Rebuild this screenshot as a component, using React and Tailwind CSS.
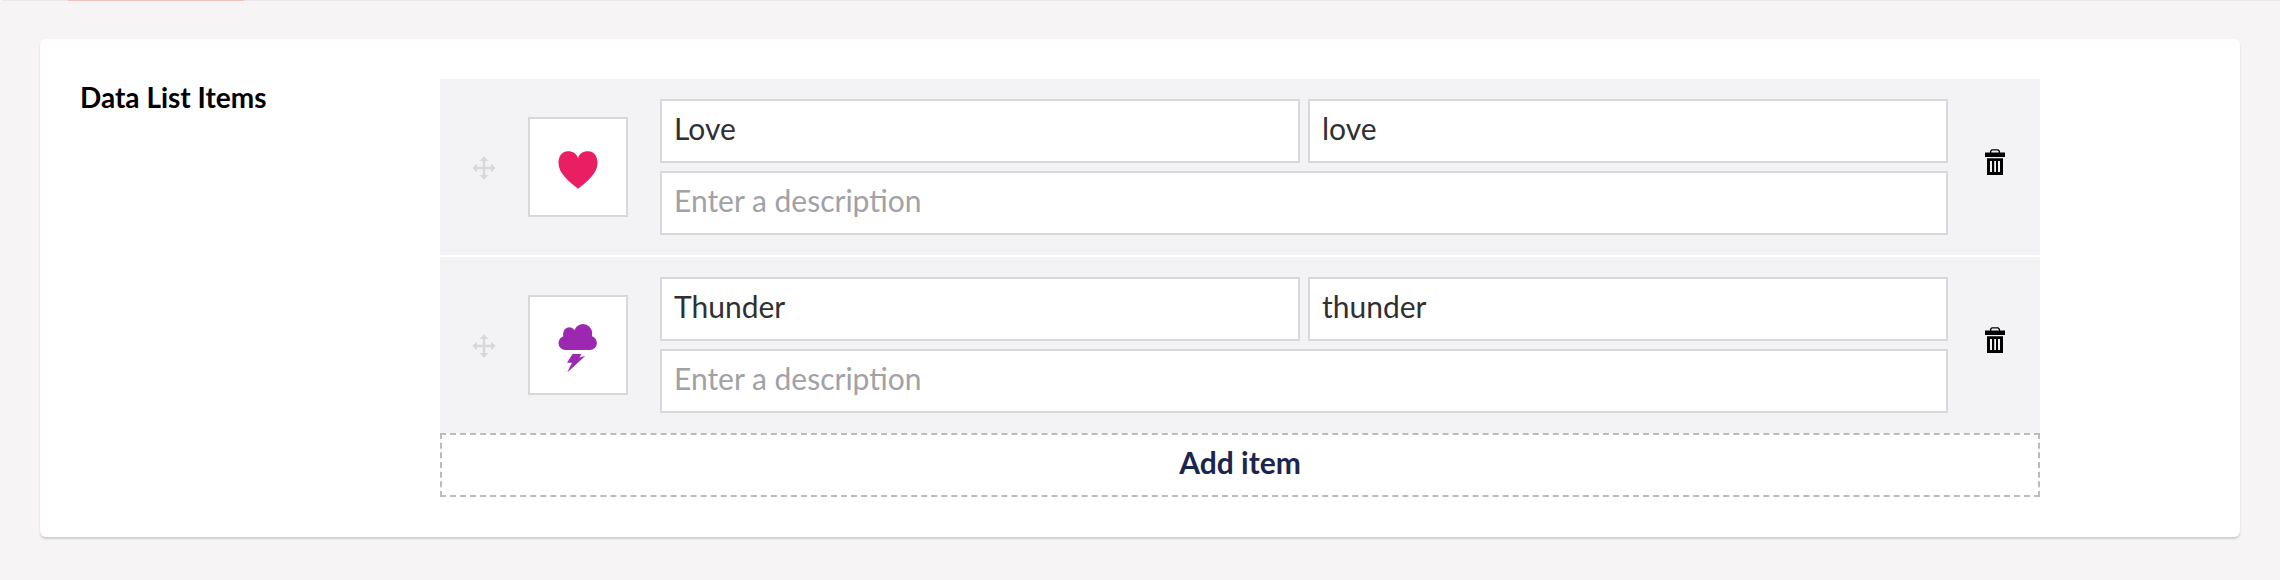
function HandleIcon() {
  return (
    <svg className="mt-0.5 size-6 shrink-0 text-[#d8d7d9]" viewBox="0 0 24 24" fill="currentColor">
      <path d="M12 .2l4.300 4.800h-3.100v5.800H19V7.700L23.800 12L19 16.300v-3.100h-5.800V19h3.100L12 23.800L7.700 19h3.100v-5.800H5v3.100L.2 12L5 7.700v3.100h5.800V5H7.700z" />
    </svg>
  );
}

function HeartIcon() {
  return (
    <svg className="mt-1.5 h-[38px] w-10" viewBox="0 0 40 38" fill="#e91e63">
      <path d="M20 7.200C21.200 2.500 25 .2 30 .2C36 .2 39.500 5 39.500 12C39.500 22.500 29 30.500 20 37.800C11 30.500 .5 22.500 .5 12C.5 5 4 .2 10 .2C15 .2 18.800 2.500 20 7.200Z" />
    </svg>
  );
}

function ThunderIcon() {
  return (
    <svg className="mt-1.5 h-12 w-10" viewBox="0 0 40 48" fill="#9c27b0">
      <circle cx="11.300" cy="9.200" r="6" />
      <circle cx="25" cy="9.100" r="9.100" />
      <circle cx="7.500" cy="19" r="7" />
      <circle cx="31.900" cy="19" r="7" />
      <path d="M5.300 9H34.100V14H31.900V26H7.500V14H5.300Z" />
      <path d="M14.500 30H23.500L21.300 33.400L27.200 32.100L9.200 48.500L14 38.700L9 38.800Z" />
    </svg>
  );
}

function TrashIcon() {
  return (
    <svg className="-mt-2.5 h-[26px] w-5 shrink-0" viewBox="0 0 20 26">
      <path d="M5.600 4V2.200L6.900 .8H13.100L14.400 2.200V4" fill="none" stroke="#000" strokeWidth="1.300" />
      <path d="M0 3.500H20V8H0Z" fill="#000" />
      <path
        fillRule="evenodd"
        d="M2 9.200H18V26H2ZM5 12V23H7V12ZM9.200 12V23H11V12ZM13 12V23H15V12Z"
        fill="#000"
      />
    </svg>
  );
}

const items = [
  { name: "Love", value: "love", Icon: HeartIcon },
  { name: "Thunder", value: "thunder", Icon: ThunderIcon },
];

function Field({ children, muted }) {
  return (
    <div
      className={
        "h-16 min-w-0 flex-1 border-2 border-[#d8d7d9] bg-white px-3 pt-[7px] text-[30px] leading-10 " +
        (muted ? "text-[#a2a1a6]" : "text-[#303033]")
      }
    >
      {children}
    </div>
  );
}

function Item({ name, value, Icon }) {
  return (
    <div className="flex h-44 items-center bg-[#f3f3f5] pr-[35px] pl-8">
      <HandleIcon />
      <div className="ml-8 flex size-[100px] shrink-0 items-center justify-center border-2 border-[#d8d7d9] bg-white">
        <Icon />
      </div>
      <div className="mr-[37px] ml-8 flex flex-1 flex-col gap-2">
        <div className="flex gap-2">
          <Field>{name}</Field>
          <Field>{value}</Field>
        </div>
        <div className="flex">
          <Field muted>Enter a description</Field>
        </div>
      </div>
      <TrashIcon />
    </div>
  );
}

export default function App() {
  return (
    <div className="h-[580px] w-[2280px] overflow-hidden bg-[#f6f4f5] font-['Lato',sans-serif]">
      <div className="ml-0.5 flex h-px bg-[#e9e9eb]">
        <div className="ml-[66px] w-44 bg-[#f5c1bc]" />
      </div>
      <div className="mx-10 mt-[38px] flex h-[498px] rounded-md bg-white px-10 pt-10 shadow-[0_2px_2px_0_rgba(0,0,0,0.16)]">
        <div className="w-[360px] text-[28px] leading-9 font-bold text-black">Data List Items</div>
        <div className="w-[1600px]">
          <div className="flex flex-col gap-0.5">
            {items.map((item) => (
              <Item key={item.name} {...item} />
            ))}
          </div>
          <button className="block h-16 w-full border-2 border-dashed border-[#bbbabf] pb-1.5 text-[30px] leading-10 font-bold text-[#1b264f]">
            Add item
          </button>
        </div>
      </div>
    </div>
  );
}
